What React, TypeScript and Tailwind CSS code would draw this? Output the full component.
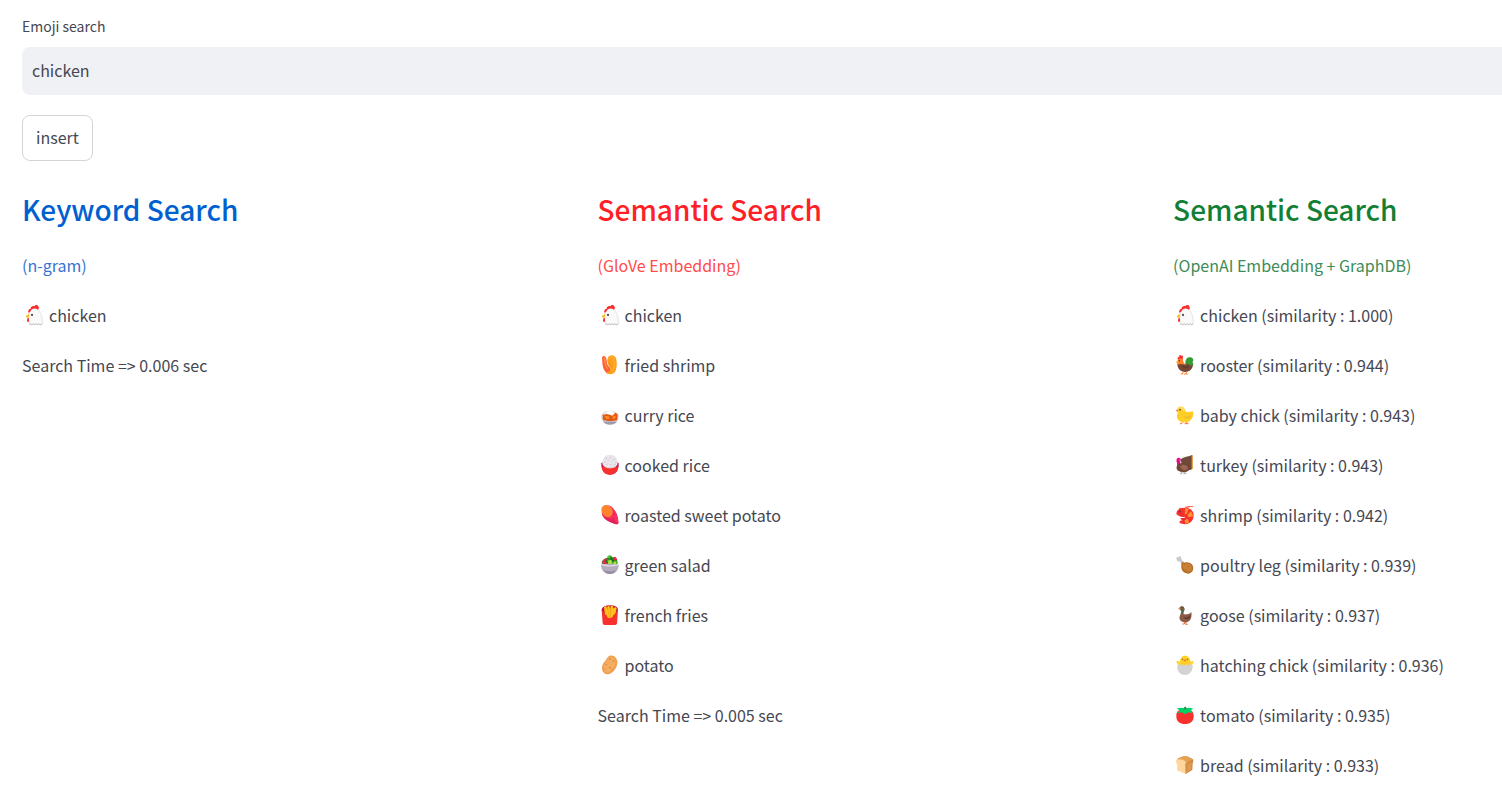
import { useState, type ReactNode } from "react";

const art: Record<string, ReactNode> = {
  chicken: (
    <>
      <path d="M14 22 C16 8 29 5 38 13 C46 20 51 34 52 48 L51 58 L47 60 L42 58 L38 60 L34 58 L29 60 L25 58 L20 60 L13 58 L12 48 C9 40 12 32 14 22Z" fill="#fafafa" stroke="#d0d0d0" strokeWidth="1.6" />
      <path d="M13 58 L17 56 L20 59 L25 56 L29 59 L34 56 L38 59 L42 56 L47 59 L52 56" fill="none" stroke="#aaa" strokeWidth="2" />
      <path d="M10 23 C8 17 12 11 17 11 C16 4 25 1 28 4 C31 -2 40 -1 40 5 C43 7 42 12 39 14 C31 8 20 9 15 21Z" fill="#f92f2f" />
      <path d="M12 26 L2 34 Q2 38 11 39Z" fill="#fcb912" />
      <path d="M7 40 H12 L12 49 Q8 53 6 48Z" fill="#f92f2f" />
      <circle cx="21" cy="30" r="3.5" fill="#585858" />
    </>
  ),
  friedShrimp: (
    <>
      <path d="M3 6 C7 1 12 3 15 8 C18 15 17 24 20 30 L28 40 L26 56 C11 55 4 39 4 20Z" fill="#ff6236" />
      <path d="M7 9 C11 8 12 12 12 18 C12 28 16 36 21 42" fill="none" stroke="#ffa447" strokeWidth="3" />
      <path d="M20 10 C23 -2 41 -3 45 10 C49 22 48 42 42 51 C35 59 24 59 14 54 C23 51 28 46 28 38 C21 30 17 20 20 10Z" fill="#ff9d1c" />
      <path d="M27 9 C31 4 38 5 39 14 C42 26 41 39 34 49" fill="none" stroke="#ffb02f" strokeWidth="5" strokeLinecap="round" />
      <path d="M24 22 C25 29 28 33 31 38" fill="none" stroke="#f07d08" strokeWidth="2" />
    </>
  ),
  curry: (
    <>
      <path d="M1 29 H53 C54 48 43 58 27 58 C11 58 0 48 1 29Z" fill="#c5c4cc" />
      <path d="M6 50 H48 C42 57 33 59 27 59 C18 59 11 56 6 50Z" fill="#a39bab" />
      <path d="M2 30 C3 13 51 13 52 30 L50 37 H4Z" fill="#e6e4e9" />
      <path d="M5 28 C14 33 20 22 29 27 C36 21 46 23 50 29 L48 45 C34 50 18 49 6 44Z" fill="#e5560f" />
      <path d="M15 25 C20 16 36 16 41 26 L33 32 C27 28 21 30 15 25Z" fill="#fff" />
      <path d="M11 34 L23 33 L26 41 L16 43Z M36 31 L45 34 L41 42 L34 40Z" fill="#ff8b2b" />
    </>
  ),
  rice: (
    <>
      <path d="M1 25 C5 18 48 18 53 25 C54 45 45 59 27 59 C10 59 0 45 1 25Z" fill="#ca0b4a" />
      <path d="M2 36 H52 C49 51 42 59 27 59 C12 59 4 51 2 36Z" fill="#f8312f" />
      <path d="M4 25 C4 7 13 -1 27 -1 C41 -1 50 8 50 24 C49 45 7 45 4 25Z" fill="#e9e7ec" />
      <path d="M5 27 C13 40 41 40 49 27 C44 43 10 43 5 27Z" fill="#d7d4dc" />
      <path d="M14 11 L18 9 M27 6 L30 8 M39 11 L42 14 M9 21 L13 22 M21 17 L24 14 M33 19 L36 16 M44 23 L47 20 M17 29 L20 26 M29 28 L32 31 M40 29 L43 27" stroke="#bcb9c3" strokeWidth="3" />
    </>
  ),
  sweetPotato: (
    <>
      <path d="M30 4 C46 17 51 31 52 47 C55 56 50 61 42 57 C27 51 11 45 4 32 C-3 16 15 -5 30 4Z" fill="#f92f60" />
      <path d="M28 42 C37 41 46 49 51 57 C36 57 13 46 7 35Z" fill="#e4205a" />
      <ellipse cx="18" cy="18" rx="16" ry="19" fill="#ff822d" transform="rotate(-35 18 18)" />
      <path d="M37 25 L42 30 M34 38 L39 43" stroke="#c5134f" strokeWidth="2.5" />
    </>
  ),
  salad: (
    <>
      <path d="M2 24 C5 9 15 11 19 8 C22 -1 31 1 34 7 C45 5 50 15 50 25 L45 34 H8Z" fill="#269022" />
      <path d="M4 19 L15 9 L23 21 L18 30 H6Z M35 8 L43 5 L49 13 L43 19Z" fill="#e9294b" />
      <path d="M19 17 L31 14 L35 28 L22 30Z M38 19 L47 20 L45 30 H36Z" fill="#a6e33a" />
      <path d="M19 4 L25 1 L29 6 L23 10Z" fill="#5fca38" />
      <path d="M14 15 L20 25 M30 9 L38 20" stroke="#116c20" strokeWidth="4" />
      <path d="M0 29 C8 25 46 25 53 29 C53 45 43 57 27 57 C9 57 0 44 0 29Z" fill="#b4acbc" />
      <path d="M2 29 Q27 36 51 29" fill="none" stroke="#e0dbe5" strokeWidth="4" />
      <path d="M8 45 Q27 53 45 45 Q38 57 27 57 Q14 57 8 45Z" fill="#998ea4" />
    </>
  ),
  fries: (
    <>
      <path d="M2 15 C2 7 13 1 27 1 C42 1 51 7 51 15 L46 30 H7Z" fill="#ca0b4a" />
      <path d="M9 6 L16 3 L19 14 V5 L25 1 L27 13 L30 1 L37 3 L36 12 L42 6 L47 10 L42 34 L29 42 L12 33Z" fill="#ffc31b" />
      <path d="M20 7 L22 29 M29 9 L28 33 M38 10 L34 31 M13 10 L17 27" fill="none" stroke="#f29b12" strokeWidth="2.5" />
      <path d="M2 14 C8 19 11 32 27 34 C42 32 46 19 51 14 L48 55 Q48 59 43 60 H10 Q5 59 5 55Z" fill="#f8312f" />
      <path d="M15 11 L21 35 Q27 38 33 34 L38 11" fill="none" stroke="#ffc31b" strokeWidth="5" />
    </>
  ),
  potato: (
    <>
      <path d="M21 6 C27 -1 39 1 44 8 C53 17 49 34 42 43 C35 54 22 62 12 56 C-1 49 2 31 9 22 C15 18 16 11 21 6Z" fill="#ef9f50" />
      <path d="M23 8 C34 1 47 12 43 27 C41 39 27 54 17 52 C6 51 4 35 13 25 C20 18 17 14 23 8Z" fill="#f7ad60" />
      <path d="M25 11 L28 13 M36 19 L39 18 M15 30 L17 28 M25 37 L28 38 M11 42 L13 44 M32 43 L34 41" stroke="#b87539" strokeWidth="2.5" strokeLinecap="round" />
    </>
  ),
  rooster: (
    <>
      <path d="M28 28 C27 12 34 6 42 7 C52 7 55 17 49 22 C55 25 51 31 48 33 L43 44 L29 42Z" fill="#359b36" />
      <path d="M6 14 C3 9 5 5 10 5 C8 -1 14 -1 16 3 C20 -1 23 6 20 10 L21 18 L12 24 L5 25Z" fill="#f8312f" />
      <path d="M5 15 C10 7 22 9 22 20 L28 30 L15 39 L3 31Z" fill="#ff822d" />
      <path d="M5 29 L15 27 L28 29 L35 25 C41 34 49 32 51 28 C51 41 41 51 29 51 C15 51 4 41 5 29Z" fill="#754536" />
      <path d="M20 33 Q28 42 38 34" fill="none" stroke="#543127" strokeWidth="3" />
      <path d="M3 18 L-1 22 L4 24Z" fill="#ffc31b" />
      <circle cx="10" cy="17" r="2" fill="#402a32" />
      <path d="M22 49 L20 57 H14 M32 50 L30 57 H24 M30 57 H35" fill="none" stroke="#ff822d" strokeWidth="3" />
    </>
  ),
  babyChick: (
    <>
      <path d="M19 52 L17 56 H12 M32 51 V56 H26 M32 56 H37" fill="none" stroke="#f56b3d" strokeWidth="3" />
      <path d="M3 15 C4 1 25 1 27 16 C29 24 40 21 51 19 C55 32 48 50 30 52 C13 54 1 45 3 31 C4 26 7 24 4 20Z" fill="#fccf27" />
      <path d="M7 12 C12 5 23 9 23 18" fill="none" stroke="#ffe26b" strokeWidth="4" />
      <path d="M23 29 C30 40 42 34 45 27 C47 40 29 48 23 29Z" fill="#f4b72c" />
      <path d="M4 13 L-1 17 L6 20Z" fill="#f46c38" />
      <circle cx="12" cy="14" r="2.6" fill="#5b4634" />
    </>
  ),
  turkey: (
    <>
      <path d="M14 14 C20 5 36 6 47 0 L51 3 V40 L43 46 L18 32Z" fill="#6f4a3b" />
      <path d="M47 1 L51 2 V41 L47 43Z" fill="#e6a252" />
      <path d="M3 24 C-1 13 4 5 10 9 C16 10 16 16 12 20 L15 32 L3 30Z" fill="#e0107f" />
      <path d="M9 15 C14 14 13 22 17 24" fill="none" stroke="#af87a1" strokeWidth="3" />
      <path d="M2 35 C4 22 28 21 38 28 C46 34 43 49 29 51 C14 54 -1 46 2 35Z" fill="#714633" />
      <path d="M12 34 C19 26 35 28 36 40 C31 50 16 47 12 34Z" fill="#9b6856" />
      <path d="M17 49 V56 H12 M27 50 V56 H22 M27 56 H31" fill="none" stroke="#8e8e91" strokeWidth="2" />
    </>
  ),
  shrimp: (
    <>
      <path d="M52 4 L28 6 M45 4 L23 11 L9 10" fill="none" stroke="#ff6a5c" strokeWidth="3" />
      <path d="M1 27 C1 14 12 8 28 8 C44 9 53 18 53 31 C53 48 40 59 26 58 L12 55 C8 50 13 46 19 46 L12 39 C19 38 27 41 27 35 C20 38 9 35 1 27Z" fill="#f8312f" />
      <path d="M28 9 L26 28 L33 26 L38 12Z M45 19 L34 31 L38 37 L52 34Z M34 41 L26 46 L28 57 L40 52Z" fill="#ff922d" />
      <path d="M9 29 L21 34 M16 43 L27 43" stroke="#d8222e" strokeWidth="2" />
      <circle cx="12" cy="20" r="2.5" fill="#502d3a" />
    </>
  ),
  poultry: (
    <>
      <path d="M2 13 C-1 7 4 4 8 8 C8 1 15 2 15 8 L18 16 L25 22 L19 29 L10 19 C5 20 2 18 2 13Z" fill="#c9c9ce" />
      <path d="M16 29 C15 22 20 20 25 23 C34 19 48 23 51 34 C55 49 43 59 31 55 C21 52 14 43 16 29Z" fill="#b8702a" />
      <path d="M19 28 C22 23 25 27 30 26 C40 24 48 31 47 41 C46 50 34 53 27 46 C22 41 19 35 19 28Z" fill="#c98136" />
      <path d="M24 30 L27 28 M36 34 L39 35 M30 43 L33 45" stroke="#965521" strokeWidth="2" />
    </>
  ),
  goose: (
    <>
      <path d="M27 51 L25 57 H19 M31 51 L29 58 H35" fill="none" stroke="#e8753e" strokeWidth="3" />
      <path d="M12 5 C18 1 27 5 25 14 C24 20 20 23 24 28 C31 29 40 28 46 21 C48 33 46 50 31 52 C17 54 8 45 11 34 C13 27 19 23 15 17 L10 13Z" fill="#8b5a45" />
      <path d="M14 14 C22 12 22 4 15 3 C23 1 29 12 23 21 L18 28 L13 25 C18 20 17 17 14 14Z" fill="#526b54" />
      <path d="M22 36 C32 39 39 35 44 29 C44 43 30 48 22 36Z" fill="#643e34" />
      <path d="M13 7 L6 10 Q8 13 14 13Z" fill="#f0853a" />
      <circle cx="16" cy="8" r="1.5" fill="#332b2b" />
    </>
  ),
  hatching: (
    <>
      <path d="M11 22 C12 9 18 2 27 2 C36 2 43 9 44 22 L49 28 L42 36 H12 L5 28Z" fill="#fccf27" />
      <path d="M1 21 Q1 17 6 18 L14 22 L12 30 L5 28Z M53 21 Q53 17 48 18 L40 22 L42 30 L49 28Z" fill="#fcd43c" />
      <path d="M4 31 L9 27 L15 32 L21 27 L27 32 L33 27 L39 32 L45 27 L50 31 C51 47 42 60 27 60 C11 60 2 47 4 31Z" fill="#d3d3d3" />
      <circle cx="20" cy="13" r="2" fill="#725326" />
      <circle cx="34" cy="13" r="2" fill="#725326" />
      <path d="M22 16 L27 13 L32 16 L27 20Z" fill="#f68b22" />
    </>
  ),
  tomato: (
    <>
      <path d="M1 32 C1 17 12 12 27 13 C42 12 53 17 53 32 C54 49 42 57 27 57 C12 57 0 49 1 32Z" fill="#f8312f" />
      <path d="M2 11 Q13 7 22 9 H32 Q42 7 52 11 L44 16 L50 25 L37 22 L27 28 L17 22 L5 25 L11 16Z" fill="#00d26a" />
      <path d="M25 5 H30 L31 13 H24Z" fill="#36854b" />
    </>
  ),
  bread: (
    <>
      <path d="M25 6 Q31 1 38 6 L50 12 C54 16 51 21 50 25 L49 45 L29 57 L25 50Z" fill="#d28a43" />
      <path d="M5 10 L23 3 Q29 2 35 5 L50 13 L31 23 L7 18Z" fill="#e5a050" />
      <path d="M2 14 C8 9 26 14 30 20 C33 25 27 27 28 32 L29 57 L3 46 L4 29 C0 26 -1 17 2 14Z" fill="#ffd69b" />
      <path d="M3 13 C12 10 29 16 30 22 Q30 26 28 28 L29 57" fill="none" stroke="#e9ad67" strokeWidth="2" />
      <path d="M33 28 L47 21 L46 42 L33 50Z" fill="#dc9a50" />
    </>
  ),
};

type Row = { icon: string; text: string };
type Column = {
  title: string;
  note: string;
  titleClass: string;
  noteClass: string;
  rows: Row[];
  time?: string;
};

const columns: Column[] = [
  {
    title: "Keyword Search",
    note: "(n-gram)",
    titleClass: "text-[#0060cf]",
    noteClass: "text-[#3574cf]",
    rows: [{ icon: "chicken", text: "chicken" }],
    time: "Search Time => 0.006 sec",
  },
  {
    title: "Semantic Search",
    note: "(GloVe Embedding)",
    titleClass: "text-[#ff2025]",
    noteClass: "text-[#ff4b4b]",
    rows: [
      { icon: "chicken", text: "chicken" },
      { icon: "friedShrimp", text: "fried shrimp" },
      { icon: "curry", text: "curry rice" },
      { icon: "rice", text: "cooked rice" },
      { icon: "sweetPotato", text: "roasted sweet potato" },
      { icon: "salad", text: "green salad" },
      { icon: "fries", text: "french fries" },
      { icon: "potato", text: "potato" },
    ],
    time: "Search Time => 0.005 sec",
  },
  {
    title: "Semantic Search",
    note: "(OpenAI Embedding + GraphDB)",
    titleClass: "text-[#127f35]",
    noteClass: "text-[#3d8b56]",
    rows: [
      { icon: "chicken", text: "chicken (similarity : 1.000)" },
      { icon: "rooster", text: "rooster (similarity : 0.944)" },
      { icon: "babyChick", text: "baby chick (similarity : 0.943)" },
      { icon: "turkey", text: "turkey (similarity : 0.943)" },
      { icon: "shrimp", text: "shrimp (similarity : 0.942)" },
      { icon: "poultry", text: "poultry leg (similarity : 0.939)" },
      { icon: "goose", text: "goose (similarity : 0.937)" },
      { icon: "hatching", text: "hatching chick (similarity : 0.936)" },
      { icon: "tomato", text: "tomato (similarity : 0.935)" },
      { icon: "bread", text: "bread (similarity : 0.933)" },
    ],
  },
];

function Results({ column }: { column: Column }) {
  return (
    <section className="flex flex-col gap-6 whitespace-nowrap">
      <h2 className={`text-[28px] leading-[38px] font-medium ${column.titleClass}`}>{column.title}</h2>
      <p className={`leading-[26px] ${column.noteClass}`}>{column.note}</p>
      <ul className="flex flex-col gap-6">
        {column.rows.map((row) => (
          <li key={row.icon} className="flex items-center gap-1.5 pl-[3px] leading-[26px]">
            <svg viewBox="0 0 54 60" className="h-5 w-[18px] shrink-0 overflow-visible" preserveAspectRatio="none" aria-hidden="true">
              {art[row.icon]}
            </svg>
            <span>{row.text}</span>
          </li>
        ))}
      </ul>
      {column.time && <p className="leading-[26px]">{column.time}</p>}
    </section>
  );
}

export default function App() {
  const [query, setQuery] = useState("chicken");
  return (
    <main className="overflow-hidden bg-white pt-[15px] pb-8 pl-[22px] font-['Noto_Sans_CJK_JP','Noto_Sans',sans-serif] text-[16px] text-[#454752]">
      <label htmlFor="query" className="block text-[14px] leading-[22px]">
        Emoji search
      </label>
      <input
        id="query"
        value={query}
        onChange={(event) => setQuery(event.target.value)}
        className="mt-2.5 block h-12 w-full rounded-l-lg bg-[#f0f1f5] px-2.5 pb-0.5 outline-none"
      />
      <button type="button" className="mt-5 block h-[46px] rounded-lg border border-[#d5d5d8] px-[13px] pb-0.5">
        insert
      </button>
      <div className="mt-[29px] grid grid-cols-[7fr_7fr_4fr]">
        {columns.map((column) => (
          <Results key={column.note} column={column} />
        ))}
      </div>
    </main>
  );
}
